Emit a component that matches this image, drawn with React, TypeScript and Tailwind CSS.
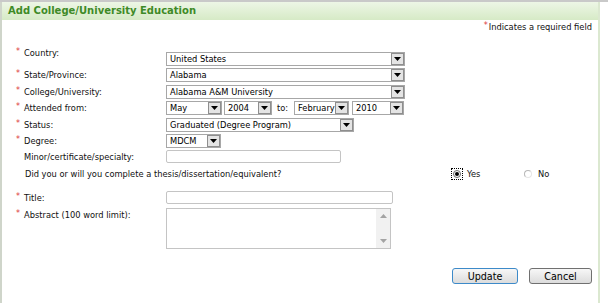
import React from "react";

const Arrow = () => (
  <div className="ml-auto w-[13px] h-[12px] mr-[0px] bg-[#e4e4e4] border border-[#8e8e8e] flex items-center justify-center shrink-0">
    <svg width="7" height="4" viewBox="0 0 7 4">
      <path d="M0 0H7L3.5 4Z" fill="#000" />
    </svg>
  </div>
);

const Select = ({ w, value }: { w: string; value: string }) => (
  <div className={`${w} h-[14px] border border-[#a7a7a7] bg-white flex items-center shrink-0`}>
    <span className="pl-[3px] text-[8.3px] leading-[10px] text-black whitespace-nowrap">{value}</span>
    <Arrow />
  </div>
);

const Star = ({ show = true }: { show?: boolean }) => (
  <span className="w-[8px] shrink-0 text-[#dd3b3b] text-[8px] leading-[8px] self-start pt-[0px]">
    {show ? "*" : ""}
  </span>
);

const Label = ({ text, req = true, cls = "" }: { text: string; req?: boolean; cls?: string }) => (
  <div className={`w-[164px] pl-[14px] flex shrink-0 ${cls}`}>
    <Star show={req} />
    <span className="leading-[10px] whitespace-nowrap">{text}</span>
  </div>
);

export default function App() {
  return (
    <div className="w-[608px] h-[303px] bg-white overflow-hidden border-t-2 border-[#c9c9c9] font-['DejaVu_Sans',sans-serif] text-[8.3px] text-[#111]">
      <div className="w-[600px] h-full border-l-2 border-r-2 border-l-[#cfd5ca] border-r-[#dbe8d0] flex flex-col">
        <div className="h-[18px] bg-linear-to-b from-[#edf6e6] to-[#d6eac6] pl-[6px] flex items-center text-[10px] font-bold text-[#3e8a27] leading-[12px]">
          Add College/University Education
        </div>

        <div className="h-[14px] flex items-center justify-end pr-[6px]">
          <span className="text-[#dd3b3b] text-[8px] leading-[8px] self-start mt-[2px] mr-[1px]">*</span>
          <span className="leading-[10px]">Indicates a required field</span>
        </div>

        <div className="mt-[18px] h-[14px] flex items-start">
          <Label text="Country:" cls="-mt-[4px]" />
          <Select w="w-[239px]" value="United States" />
        </div>

        <div className="mt-[2px] h-[14px] flex items-center">
          <Label text="State/Province:" />
          <Select w="w-[239px]" value="Alabama" />
        </div>

        <div className="mt-[3px] h-[14px] flex items-center">
          <Label text="College/University:" />
          <Select w="w-[239px]" value="Alabama A&M University" />
        </div>

        <div className="mt-[2px] h-[14px] flex items-center">
          <Label text="Attended from:" />
          <Select w="w-[56px]" value="May" />
          <div className="ml-[2px]">
            <Select w="w-[48px]" value="2004" />
          </div>
          <span className="ml-[5px] w-[17px] leading-[10px]">to:</span>
          <Select w="w-[55px]" value="February" />
          <div className="ml-[3px]">
            <Select w="w-[52px]" value="2010" />
          </div>
        </div>

        <div className="mt-[3px] h-[14px] flex items-center">
          <Label text="Status:" />
          <Select w="w-[188px]" value="Graduated (Degree Program)" />
        </div>

        <div className="mt-[2px] h-[14px] flex items-center">
          <Label text="Degree:" />
          <Select w="w-[55px]" value="MDCM" />
        </div>

        <div className="mt-[2px] h-[13px] flex items-center">
          <Label text="Minor/certificate/specialty:" req={false} />
          <div className="w-[175px] h-[13px] border border-[#c4c4c4] rounded-[2px] bg-white" />
        </div>

        <div className="mt-[6px] h-[10px] flex items-center">
          <span className="pl-[23px] w-[450px] leading-[10px] whitespace-nowrap">
            Did you or will you complete a thesis/dissertation/equivalent?
          </span>
          <div className="flex items-center">
            <div className="w-[10px] h-[10px] outline outline-1 outline-dotted outline-black flex items-center justify-center">
              <div className="w-[8px] h-[8px] rounded-full border border-[#6d6d6d] bg-white flex items-center justify-center">
                <div className="w-[4px] h-[4px] rounded-full bg-black" />
              </div>
            </div>
            <span className="ml-[5px] w-[57px] leading-[10px]">Yes</span>
            <div className="w-[8px] h-[8px] rounded-full border border-[#b8b8b8] border-r-[#e6e6e6] border-b-[#e6e6e6] bg-white" />
            <span className="ml-[6px] leading-[10px]">No</span>
          </div>
        </div>

        <div className="mt-[12px] h-[13px] flex items-center">
          <Label text="Title:" />
          <div className="w-[227px] h-[13px] border border-[#c4c4c4] rounded-[2px] bg-white" />
        </div>

        <div className="mt-[4px] h-[41px] flex items-start">
          <Label text="Abstract (100 word limit):" cls="mt-[2px]" />
          <div className="w-[225px] h-[41px] border border-[#c4c4c4] bg-white flex justify-end">
            <div className="w-[14px] h-full bg-[#f1f1f1] flex flex-col items-center justify-between py-[5px]">
              <svg width="7" height="4" viewBox="0 0 7 4">
                <path d="M0 4H7L3.5 0Z" fill="#a3a3a3" />
              </svg>
              <svg width="7" height="4" viewBox="0 0 7 4">
                <path d="M0 0H7L3.5 4Z" fill="#a3a3a3" />
              </svg>
            </div>
          </div>
        </div>

        <div className="mt-[19px] flex items-center">
          <div className="ml-[450px] w-[66px] h-[16px] rounded-[3px] border border-[#3d8ac9] bg-linear-to-b from-[#f7f7f7] to-[#dcdcdc] flex items-center justify-center text-[9.6px] leading-[11px] text-black">
            Update
          </div>
          <div className="ml-[11px] w-[63px] h-[16px] rounded-[3px] border border-[#707070] bg-linear-to-b from-[#f7f7f7] to-[#dcdcdc] flex items-center justify-center text-[9.6px] leading-[11px] text-black">
            Cancel
          </div>
        </div>
      </div>
    </div>
  );
}
